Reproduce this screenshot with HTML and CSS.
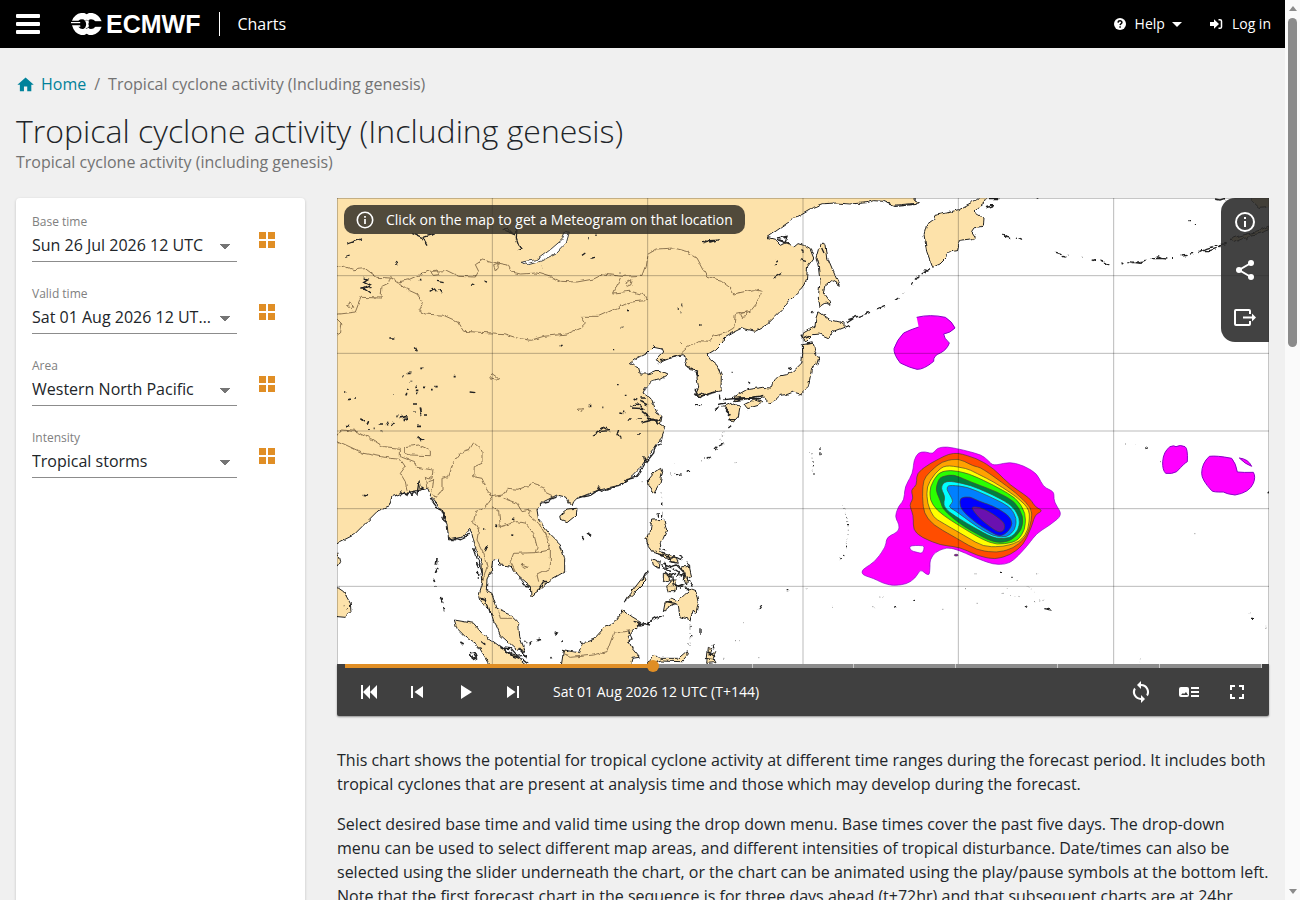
FILE: index.html
```html
<!DOCTYPE html>
<html lang="en">
<head>
<meta charset="utf-8">
<title>Tropical cyclone activity (Including genesis)</title>
<link rel="stylesheet" href="styles.css">
</head>
<body>
<div class="shell">
<div class="page">
  <header class="topbar">
    <button class="menu" aria-label="Menu"><span></span><span></span><span></span></button>
    <a class="logo" href="#" aria-label="ECMWF">
      <svg width="31" height="22" viewBox="0 0 93 66" aria-hidden="true">
        <path fill="#fff" d="M30 0H40L47 4 54 0H64Q84 4 92 25H73Q68 19 60 19 55 19 52 23L47 20 42 23Q39 19 33 19 27 19 22 23H3Q11 3 30 0ZM0 27H28V31H0ZM3 37H28V41H22Q28 48 34 48 39 48 42 44L47 47 52 44Q55 48 60 48 68 48 73 41H92Q84 62 64 66H54L47 62 40 66H30Q10 62 3 37Z"/>
        <path fill="#fff" d="M42 23Q52 20 54 27H68V39H54Q51 47 42 44Q49 34 42 23Z"/>
        <path d="M29 27Q33 24 39 27 43 33 39 39 33 43 29 39V36H0V32H29ZM54 26Q60 22 67 26H93V40H67Q60 44 54 40 50 33 54 26Z"/>
      </svg>
      <span>ECMWF</span>
    </a>
    <a class="section" href="#">Charts</a>
    <nav class="account">
      <button class="toplink">
        <svg width="12" height="12" viewBox="0 0 12 12"><circle cx="6" cy="6" r="6" fill="#fff"/><path d="M4.1 4.6C4.2 2.2 8 2.3 7.9 4.5 7.8 5.7 6.2 5.8 6.1 7.1M6.1 8.3V9.8" fill="none" stroke="#000" stroke-width="1.5"/></svg>
        Help
        <svg class="caret" width="10" height="5" viewBox="0 0 10 5"><path d="M0 0H10L5 5Z" fill="#fff"/></svg>
      </button>
      <a class="toplink" href="#">
        <svg width="13" height="12" viewBox="0 0 13 12"><path d="M0 4H4V1.2L9 6 4 10.8V8H0Z" fill="#fff"/><path d="M8.500 1.700H10Q11.500 1.700 11.500 3V9Q11.500 10.300 10 10.300H8.500" fill="none" stroke="#fff" stroke-width="1.500"/></svg>
        Log in
      </a>
    </nav>
  </header>

  <main class="content">
    <nav class="crumbs">
      <svg width="20" height="18" viewBox="0 0 24 22"><path fill="#00829b" d="M9.500 20V14H13.500V20H18.500V12H21.500L11.500 3 1.500 12H4.500V20Z"/></svg>
      <a href="#">Home</a><span>/</span><span>Tropical cyclone activity (Including genesis)</span>
    </nav>
    <h1>Tropical cyclone activity (Including genesis)</h1>
    <p class="subtitle">Tropical cyclone activity (including genesis)</p>

    <div class="layout">
      <aside class="filters">
        <div class="filter"><label for="base">Base time</label><select id="base"><option>Sun 26 Jul 2026 12 UTC</option></select><button aria-label="All base times"><i></i><i></i><i></i><i></i></button></div>
        <div class="filter"><label for="valid">Valid time</label><select id="valid"><option>Sat 01 Aug 2026 12 UTC (T+144)</option></select><button aria-label="All valid times"><i></i><i></i><i></i><i></i></button></div>
        <div class="filter"><label for="area">Area</label><select id="area"><option>Western North Pacific</option></select><button aria-label="All areas"><i></i><i></i><i></i><i></i></button></div>
        <div class="filter"><label for="intensity">Intensity</label><select id="intensity"><option>Tropical storms</option></select><button aria-label="All intensities"><i></i><i></i><i></i><i></i></button></div>
      </aside>

      <section class="chart">
        <div class="viewer">
          <svg class="map" viewBox="0 0 2796 1398" role="img" aria-label="Map of the Western North Pacific">
            <defs>
              <filter id="rough" x="0" y="0" width="2796" height="1398" filterUnits="userSpaceOnUse"><feTurbulence type="fractalNoise" baseFrequency=".05" numOctaves="2" seed="4"/><feDisplacementMap in="SourceGraphic" scale="13" xChannelSelector="R" yChannelSelector="G"/><feGaussianBlur stdDeviation="1"/></filter>
            </defs>
            <rect width="2796" height="1398" fill="#fff"/>
            <g filter="url(#rough)">
            <g class="land">
              <path d="M-20-20H1735L1731 6 1748 15 1690 20 1668 22 1640 10 1609 8 1590 14 1540 18 1500 15 1459 17 1420 32 1380 55 1330 90 1290 118 1313 124 1330 142 1350 132 1370 148 1383 137 1400 142 1420 155 1430 180 1412 205 1408 245 1395 272 1360 305 1330 340 1290 380 1255 400 1215 390 1185 405 1160 420 1158 432 1135 455 1110 470 1120 485 1140 502 1153 530 1152 578 1120 585 1090 597 1075 590 1085 570 1080 540 1082 518 1060 515 1045 505 1050 480 1035 470 1000 480 965 495 958 485 980 462 975 450 950 445 930 465 910 475 900 480 877 497 905 510 910 528 935 528 960 517 992 532 970 545 945 550 925 570 918 585 940 600 950 620 960 645 975 655 970 680 985 690 975 718 960 735 929 781 909 811 880 841 850 861 785 876 720 901 710 911 705 924 695 911 690 898 660 891 620 911 600 936 605 966 640 1011 670 1041 683 1081 683 1121 640 1146 600 1181 582 1196 580 1166 545 1136 520 1104 488 1101 487 1084 467 1086 463 1121 450 1146 448 1176 465 1186 480 1231 515 1246 545 1276 548 1316 565 1361 540 1356 490 1311 475 1276 466 1246 430 1211 425 1196 437 1156 435 1096 415 1046 405 1006 398 994 380 1016 335 1026 330 976 315 936 285 901 272 871 240 878 188 888 165 896 155 926 120 941 75 986 50 1011 10 1031-20 1050Z"/>
              <path d="M1944-10 1919 5 1864 35 1829 45 1794 52 1789 65 1769 80 1761 110 1769 160 1787 208 1809 198 1829 178 1832 163 1861 158 1867 130 1909 125 1914 115 1904 100 1911 90 1939 85 1941 60 1924 50 1911 42 1924 28 1944 12 1954-10ZM2745-10V8L2765 28 2820 24V-10Z"/>
              <g transform="translate(909 0)">
                <path d="M535 155 545 135 558 140 563 180 580 220 598 262 575 248 555 265 550 285 568 310 570 322 555 315 540 325 535 300 540 250 535 205 528 180ZM535 340 570 365 612 375 612 388 580 400 567 420 540 408 520 410 500 430 487 420 490 405 525 385 528 360ZM487 440 520 435 525 460 536 480 530 500 515 510 510 540 505 565 490 580 480 588 460 582 440 590 420 592 400 612 385 615 375 598 350 595 310 605 280 608 285 595 320 575 365 568 390 570 405 545 415 535 440 530 460 520 485 495 488 470ZM248 625 275 615 300 625 295 655 280 672 265 660 265 640ZM312 620 345 603 365 610 355 622 320 632Z"/>
              </g>
              <g transform="translate(909 696)">
                <path d="M45 125 65 112 68 125 60 160 42 190 27 170 25 150ZM35 270 72 268 80 300 70 325 58 345 62 365 85 372 110 385 115 400 95 395 70 378 40 370 25 350 18 325 30 310ZM35 385 58 395 55 415 40 405ZM125 410 148 410 155 440 140 445ZM70 430 95 435 85 450 70 455ZM90 450 110 450 105 485 85 485 80 470ZM128 435 143 445 140 465ZM70 545 75 520 95 505 112 512 130 495 150 478 168 485 175 520 168 550 160 540 150 570 120 560 115 530 108 520 88 530ZM20 705 45 672 60 685 115 685 142 662 145 672 125 695 60 693 30 705ZM200 700 205 655 215 660 210 675 228 665 220 685 228 698Z"/>
              </g>
              <g transform="translate(0 696)">
                <path d="M668 255 690 237 720 235 718 255 690 278 670 270ZM868 510 880 490 915 445 925 440 930 450 900 480ZM672 712 680 660 725 668 735 640 770 628 800 595 830 580 860 540 885 560 915 578 885 605 870 620 885 655 907 682 885 685 878 712ZM352 570 410 580 435 610 490 650 540 680 580 715 465 715 425 650 385 620 360 595ZM-20 470 5 475 20 485 40 520 42 545 25 562-20 558ZM-20 350 2 370 8 395-3 415Z"/>
              </g>
            </g>
            <path class="lake" d="M552 193 600 185 640 155 675 125 685 100 697 102 688 135 660 165 610 190 575 200Z"/>
            <g class="border">
              <path d="M-10 210 20 205 50 215 85 212 120 238 160 240 180 253 215 245 270 220 330 218 365 235 415 237 425 220 415 200 440 184 480 195 515 202 525 222 550 228 600 225 650 240 670 250 720 252 770 243 800 228 855 235 915 232 925 205 930 170 960 153 1010 150 1050 160 1080 180 1110 235 1150 247 1180 270 1190 288 1250 275 1275 280 1260 315 1240 340 1195 350 1190 390 1165 405 1130 415 1120 430 1085 428 1050 450 1030 468M180 253 205 272 240 288 257 312 248 340 265 348 320 352 360 370 380 400 500 407 540 420 580 427 620 415 690 408 730 390 745 375 733 355 785 355 840 330 880 312 928 308 920 290 880 280 830 285 850 240M160 240 155 255 135 265 132 300 72 298 55 342-10 350M0 360 15 375 10 405-10 417M1030 430 1035 435"/>
              <g transform="translate(0 696)">
                <path d="M-5 25 15 0 60 5 100 25 140 50 190 55 190 80 230 95 240 112 288 120 285 145 265 140 270 175M-5 30 80 70 160 85 190 88 205 110 190 130 205 155 210 180M205 50 245 45 280 60 280 77 220 75 205 70ZM275 155 290 150 285 185 295 205 315 180 315 145 335 140 350 95 370 70 395 62 410 38 435 60 435 100 412 110 410 140 435 145 450 180 465 200 440 235 415 245 410 275 425 300 420 330 440 370 450 410 437 455M465 200 500 195 510 175 545 178 590 160 620 170 625 190 650 202M465 230 485 245 490 290 540 275 565 280 590 310 600 350 595 368 530 370 520 395 535 425M500 205 540 220 555 245 580 240 575 255 605 280 630 320 640 360 595 368M640 360 640 415 600 435 605 455M485 545 490 565 525 565M680 675 700 682 770 675 810 665 830 610 880 602"/>
              </g>
            </g>
            <path class="border" d="M285 220 300 216 306 230 290 232ZM470 200 482 196 484 206 475 220ZM458 535 468 530 485 542 478 546 460 542ZM30 320 42 315 50 328 38 328ZM725 630 736 630 734 640 724 636ZM865 258 885 245 882 260 868 266ZM1210 345 1230 342 1228 356 1215 358ZM552 1098 573 1105 570 1110 560 1107Z"/>
            <g class="shore">
              <path d="M497 95 515 90 522 105 505 100 530 110 540 90 538 120 545 140 552 150 540 155M225 103 257 118 290 108M257 118 270 140M28 138 75 122M25 178 35 174M80 240 92 243 80 250 100 260 75 270 85 272 102 285M175 192 180 200M300 250 320 254M278 280 292 272 298 280M305 275 315 288M440 250 450 252M402 261 409 262M235 448 241 460M157 420 172 420M398 582 415 584M880 625 900 618 920 632 885 630M765 712 800 688 815 698 790 700M845 695 840 710 850 722M1095 127 1120 132 1145 125M1100 136 1115 128 1135 127M1310 240 1335 225M1315 190 1320 185M1315 200H1320M1320 120 1350 115 1345 130 1320 125 1355 138M1390 185 1410 190M1390 155 1400 160M735 172 745 165M760 184 772 180M615 206 618 205M95 265 100 270"/>
              <path class="dots" d="M196 533H200M212 523H224M250 511H256M217 551H223M210 575H215M235 565H240M258 568H265M282 572H287M295 566H302M236 577H247M237 586H243M205 590H211M168 591H170M350 536H356M22 582H28M35 604H42M52 600H57M228 618H240M250 625 254 648M232 642H236M70 662 78 668M80 672 85 668M95 670 90 680M125 678H138M148 682 155 670M165 680 172 672M175 655H182M188 660 210 655M200 665 213 660M250 652H256M264 651H270M240 682H255M92 690 94 694M110 691H113M26 683H38M130 700H136M242 717H248M755 622H760M796 628H799M840 559H845M866 590V594M893 600 902 605M850 645 856 646M858 640H862M875 663H884M902 663H912M900 708H912M668 443H674M850 389H856M870 337H876M828 457H832M750 120H754M775 109H779M245 245H250M253 229H258M1022 333H1026M1033 322H1036M1030 343H1033M1089 381H1094M848 222H850M910 600H924M910 610 930 620M915 640 935 655M910 675 950 665 965 680M930 660 970 670"/>
              <path d="M185 885 190 880 195 890 205 882 210 892 217 880 225 890 230 880 240 888 246 850 250 876 260 868 265 874M280 900 290 915 300 928 315 935 325 960M315 940 322 945 318 962 328 970M335 1018 345 1028 360 1022 370 1025 385 1018 398 1005M410 1050 420 1080 430 1100 436 1130M620 915 635 912 640 903 655 899 665 891M720 902 740 896 760 892 785 876 780 866 790 880 815 872 850 864 870 845 895 838 910 820 925 795 920 775 930 790 950 765 955 745 970 738 975 718M545 1140 560 1160 580 1166M600 1180 610 1165 620 1150 635 1152M485 1345 510 1360 530 1375 560 1385 575 1397M500 1350 520 1352 540 1375 570 1370M545 1350 570 1380M730 1330 735 1345M875 1300 885 1320 875 1335M890 1270 912 1275 900 1285M430 1200 445 1205 455 1240 470 1250"/>
              <path class="dots" d="M300 1080 298 1100M303 1110 295 1125M290 1145 293 1152M296 1165 292 1168M310 1200 318 1216M320 1230 323 1240M315 1205H318M418 1095 425 1110M420 1120 430 1130M422 1140H428M450 1040 443 1060M370 1332 380 1338M402 1364 410 1362 418 1380 408 1384 400 1368M598 1328 612 1324M650 1302 660 1305 656 1310M675 1330 676 1335M640 1378 643 1380M580 1330V1340M565 1330H568M750 1005 762 1012M735 1018 740 1023M80 892 90 894M240 720 255 725 248 730M525 963 532 965M475 980 480 983M520 1007 527 1010M438 993H442M433 1330 445 1340M862 1212 870 1205M20 1225H22M30 1235H32"/>
              <g transform="translate(909 0)"><path d="M545 150 552 165M620 375 650 355M625 365 690 343M615 390 630 385M710 333 735 322M765 307 775 300M792 290 795 285M815 260 820 255M828 245 835 235M845 228 870 212M850 215 865 220M250 605 300 600 340 598 370 592M285 608 315 600 360 602M255 630 270 650 260 655M235 620 255 615M225 635 240 625M265 665 285 665M165 575 175 595 200 590 230 582M168 590 185 585 205 595M238 590 240 602M140 505 165 515 175 535M60 488 110 475M490 420 510 412M500 438 520 435M480 410 485 420M515 340 520 345M448 515 455 508M325 557 333 552M275 523H278M165 620H185M265 690 275 682M740 15 765 25 830 18"/></g>
              <g transform="translate(909 696)"><path d="M240 45 250 40M225 60 235 50M200 88 213 80M110 134 125 132M140 127 150 124M65 215V225M65 245V260M55 250V260M68 355 75 360M60 380 75 370 90 385 105 380 125 390M70 400 95 410 110 405 130 425 120 440M75 395 80 420 95 425M115 435 135 430 130 450M95 440 100 465 125 470M110 470 135 460M140 395 150 410M148 450 160 470M78 515 105 520M8 450 15 435 25 425M0 585 20 580 50 562 70 555M10 580 30 585M150 590V595M152 615V620M145 640V645M180 595V612M355 540 365 525M443 479H448M620 345V355M600 385 605 390M612 372 610 376M622 262V265M625 282V286M540 55V60M540 70V76M215 648 222 645 220 658M195 685 225 690M205 665 225 680M520 108V112M522 130V134M45 360 55 375 75 380M85 375 90 395 110 398M65 405 70 415 85 412M75 425 90 440 105 430M100 415 115 425 108 440M118 375 128 380 122 388M135 470 145 480M120 475 130 470"/><path class="faint" d="M605 225 612 240 622 262 625 300 622 345M150 570V660M508 68H510M515 70 520 130M252 5 240 40M180 90 210 80M90 132 108 130M60 190 68 215M105 100H110M284 98H287M285 632H300M310 578H312M578 529H581M500 474H503M355 686H358M5 155H12M250 685H260"/></g>
              <g transform="translate(1599 0)"><path d="M400 108 420 122M405 115 415 120M438 120 453 127M558 163 575 168M578 175 586 177M593 169H596M635 178H637M668 188 677 185M692 186 700 190M702 195 718 200M345 30 370 22M360 20H372M500 0H508M360 2H385"/></g>
              <g transform="translate(2259 -594)"><path d="M295 659H300M310 673H316M5 781 15 778M35 781 38 785M42 786 55 795M95 793 100 788M115 785 150 790 170 780M125 788 165 783M180 776 210 775 235 777M200 770 212 776M243 773H248M275 768 290 766M300 762 312 760M325 758 350 745 375 738 395 740M330 752 360 752 380 745M390 735 410 730M375 597 390 600 405 595"/><path class="land" d="M420 718 440 710 480 700 510 690 537 678V690L510 700 480 705 470 720 460 712 430 725Z"/></g>
              <g transform="translate(1539 696)"><path d="M130 530H137M190 511H195M453 430H456M484 442H488M525 528 533 533M580 536 605 540"/><path class="faint" d="M378 430V436M345 476H348M70 530H74M280 538H284M380 520H383M458 490H470M480 495 510 500M535 470 545 480M550 485 560 490M555 515 590 510M500 455H504M470 480 475 476M85 498 100 500M560 430V440"/></g>
              <g transform="translate(2199 696)"><path d="M593 193 600 186M225 54 230 55M546 565H552"/><path class="faint" d="M168 42H171M192 44H195M373 311H376M540 550V554M586 592H589M210 685 213 698M270 95H273"/></g>
            </g>
            </g>
            <g class="magenta">
              <path d="M1739 358Q1780 348 1825 358 1845 370 1854 390 1840 405 1820 408 1820 420 1837 435 1830 455 1810 465 1788 473 1790 490 1760 515 1740 514 1720 510 1690 495 1670 470 1671 452 1680 425 1700 405 1720 395 1745 387 1740 378ZM1676 502H1688V504H1676Z"/>
              <g transform="translate(2199 696)"><path d="M300 50Q312 45 318 50 330 43 345 50 354 55 352 95 345 98 320 125 305 133 287 130 277 120 278 95 280 65 300 50ZM418 79Q440 76 485 85 498 100 502 126 520 128 550 127 558 140 550 160 538 188 495 195 470 192 460 186 430 187 425 182 395 150 395 130 395 100 418 79ZM508 84Q535 87 545 109 525 102 508 84Z"/></g>
            </g>
            <g class="contours" transform="translate(1539 696)">
              <path fill="#f0f" stroke="#8a00c8" fill-rule="evenodd" d="M205 68 225 65 248 72 262 54 290 50 340 60 395 75 415 92 430 107 480 96 520 107 560 130 580 170 605 182 612 190 612 215 637 255 600 285 560 310 530 350 490 392 465 403 430 403 380 385 325 360 290 352 255 367 240 390 240 412 238 435 228 432 212 418 195 445 170 462 130 467 100 460 70 445 38 435 35 420 75 395 107 350 110 322 145 305 148 285 135 260 145 230 162 210 165 170 188 130 192 90ZM178 347 222 346 222 358 216 370 205 368 182 362Z"/>
              <path fill="#ff4d00" d="M310 65 380 85 430 115 480 165 540 205 555 230 578 242 555 255 545 290 520 345 480 375 435 388 385 378 330 352 270 345 215 322 190 300 190 255 178 225 190 205 183 180 200 165 200 130 240 100Z"/>
              <path fill="#ffa200" d="M325 85 370 108 390 112 425 135 500 190 545 235 545 270 530 320 490 355 440 368 380 360 320 325 250 285 222 250 217 200 220 150 240 125 275 95Z"/>
              <path fill="#ff0" d="M285 105 350 115 380 130 430 155 500 200 540 240 535 300 510 335 460 350 400 350 340 315 280 280 250 262 232 220 230 170 255 130Z"/>
              <path fill="#2aff00" d="M265 128 300 120 355 130 430 165 500 205 527 250 525 300 500 335 440 345 390 325 300 270 260 240 240 210 240 170Z"/>
              <path fill="#008040" d="M275 140 310 133 360 155 440 185 495 215 520 260 515 300 480 335 430 338 340 290 280 240 270 210 257 180 265 150Z"/>
              <path fill="#0ff" d="M300 153 360 165 430 195 485 225 510 265 505 300 480 325 430 325 350 280 295 245 280 225 285 200 273 175 280 158Z"/>
              <path fill="#0080ff" d="M295 165 350 170 420 200 480 230 500 265 495 300 470 322 430 318 380 290 320 245 295 230 310 215 300 195 290 178Z"/>
              <path fill="#00f" d="M330 203 360 200 385 213 430 228 475 255 488 280 475 305 450 320 420 305 380 280 345 250 330 230Z"/>
              <path fill="#6a11b0" d="M362 230 390 232 430 252 465 280 462 303 445 307 420 290 385 262Z"/>
              <path fill="#8a00c8" d="M313 373 324 373 324 378 313 378Z"/>
            </g>
            <path class="grid" d="M0 233H2796M0 466H2796M0 699H2796M0 932H2796M0 1165H2796M466 0V1398M932 0V1398M1398 0V1398M1864 0V1398M2330 0V1398M0 1H2796M2795 0V1398M1 0V1398"/>
          </svg>
          <div class="hint">
            <svg width="18" height="18" viewBox="0 0 18 18"><circle cx="9" cy="9" r="7.700" fill="none" stroke="#fff" stroke-width="1.600"/><path d="M9 8V13M9 5V6.700" stroke="#fff" stroke-width="1.700"/></svg>
            <span>Click on the map to get a Meteogram on that location</span>
          </div>
          <div class="tools">
            <button aria-label="Information"><svg width="20" height="20" viewBox="0 0 20 20"><circle cx="10" cy="10" r="9" fill="none" stroke="#fff" stroke-width="2"/><path d="M10 9V15M10 5V7" stroke="#fff" stroke-width="2"/></svg></button>
            <button aria-label="Share"><svg width="20" height="20" viewBox="0 0 20 20"><path d="M16 3 4 10 16 17" fill="none" stroke="#fff" stroke-width="2"/><g fill="#fff"><circle cx="16" cy="3" r="3"/><circle cx="4" cy="10" r="3"/><circle cx="16" cy="17" r="3"/></g></svg></button>
            <button aria-label="Export"><svg width="22" height="18" viewBox="0 0 22 18"><path d="M16 5V2Q16 1 15 1H2Q1 1 1 2V15Q1 16 2 16H15Q16 16 16 15V12M9 8.500H20" fill="none" stroke="#fff" stroke-width="2"/><path d="M18 4.500 22 8.500 18 12.500Z" fill="#fff"/></svg></button>
          </div>
        </div>
        <div class="player">
          <input class="timeline" type="range" min="0" max="9" value="3" aria-label="Forecast step">
          <div class="controls">
            <button aria-label="First"><svg viewBox="0 0 24 24"><path d="M4 5H6V19H4ZM13 5V19L6 12ZM20 5V19L13 12Z"/></svg></button>
            <button aria-label="Previous"><svg viewBox="0 0 24 24"><path d="M6 6H8V18H6ZM18 6V18L9.500 12Z"/></svg></button>
            <button aria-label="Play"><svg viewBox="0 0 24 24"><path d="M8 5V19L19 12Z"/></svg></button>
            <button aria-label="Next"><svg viewBox="0 0 24 24"><path d="M16 6H18V18H16ZM6 6V18L14.500 12Z"/></svg></button>
            <output>Sat 01 Aug 2026 12 UTC (T+144)</output>
            <button class="first-right" aria-label="Loop"><svg viewBox="0 0 24 24"><path d="M12 4V1L8 5 12 9V6A6 6 0 0 1 17.300 14.800L18.800 16.300A8 8 0 0 0 12 4ZM12 18A6 6 0 0 1 6.700 9.200L5.200 7.700A8 8 0 0 0 12 20V23L16 19 12 15Z"/></svg></button>
            <button aria-label="Legend"><svg viewBox="0 0 24 24"><path fill-rule="evenodd" d="M4 7H10Q12 7 12 9V15Q12 17 10 17H4Q2 17 2 15V9Q2 7 4 7ZM4 15H11L9 12 7 14 6 13ZM14 7H22V9H14ZM14 11H22V13H14ZM14 15H22V17H14Z"/></svg></button>
            <button aria-label="Full screen"><svg viewBox="0 0 24 24"><path d="M5 5H10V7H7V10H5ZM14 5H19V10H17V7H14ZM5 14H7V17H10V19H5ZM17 14H19V19H14V17H17Z"/></svg></button>
          </div>
        </div>
        <p>This chart shows the potential for tropical cyclone activity at different time ranges during the forecast period. It includes both tropical cyclones that are present at analysis time and those which may develop during the forecast.</p>
        <p>Select desired base time and valid time using the drop down menu. Base times cover the past five days. The drop-down menu can be used to select different map areas, and different intensities of tropical disturbance. Date/times can also be selected using the slider underneath the chart, or the chart can be animated using the play/pause symbols at the bottom left. Note that the first forecast chart in the sequence is for three days ahead (t+72hr) and that subsequent charts are at 24hr</p>
      </section>
    </div>
  </main>
</div>
<div class="scrollbar" aria-hidden="true"><span class="up"></span><span class="thumb"></span><span class="down"></span></div>
</div>
<script src="contours.js"></script>
</body>
</html>
```
FILE: contours.js
```js
// Rounds each contour ring: every listed point steers a curve between the midpoints of its sides.
document.querySelectorAll('.contours path').forEach(function (path) {
  var rings = path.getAttribute('d').split('Z').filter(Boolean);
  path.setAttribute('d', rings.map(function (ring) {
    var n = ring.slice(1).trim().split(/\s+/).map(Number);
    var pts = [];
    for (var i = 0; i < n.length; i += 2) pts.push([n[i], n[i + 1]]);
    var out = '';
    pts.forEach(function (p, k) {
      var a = pts[(k + pts.length - 1) % pts.length];
      var b = pts[(k + 1) % pts.length];
      var t = 0.6;
      var s = [p[0] + (a[0] - p[0]) * (1 - t), p[1] + (a[1] - p[1]) * (1 - t)];
      var e = [p[0] + (b[0] - p[0]) * (1 - t), p[1] + (b[1] - p[1]) * (1 - t)];
      out += (k ? 'L' : 'M') + s.join(' ') + 'Q' + p.join(' ') + ' ' + e.join(' ');
    });
    return out + 'Z';
  }).join(''));
});
```
FILE: styles.css
```css
* { box-sizing: border-box; }
body { margin: 0; background: #f0f0f0; color: #212529; font: 16px/24px "Open Sans", "Noto Sans", sans-serif; }
button { padding: 0; border: 0; background: none; color: inherit; font: inherit; cursor: pointer; }
a { color: inherit; text-decoration: none; }
svg { display: block; flex: none; }
p { margin: 0 0 16px; }

.shell { display: flex; height: 100vh; overflow: hidden; }
.page { flex: 1; min-width: 0; display: flex; flex-direction: column; overflow: hidden; }

.topbar { flex: none; display: flex; align-items: center; height: 48px; padding: 0 14px 0 16px; background: #000; color: #fff; }
.menu { display: grid; gap: 4px; width: 24px; margin-right: 31px; }
.menu span { height: 4px; border-radius: 1px; background: #fff; }
.logo { display: flex; align-items: center; gap: 4px; font: bold 25px/24px "Liberation Sans", Arial, sans-serif; }
.section { margin-left: 19px; padding-left: 17px; border-left: 1px solid #fff; }
.account { display: flex; gap: 28px; margin-left: auto; font-size: 14px; }
.toplink { display: flex; align-items: center; gap: 9px; }
.caret { margin-left: -2px; }

.content { flex: 1; display: flex; flex-direction: column; padding: 24px 16px 0; }
.crumbs { display: flex; align-items: center; gap: 8px; color: #737373; }
.crumbs svg { margin-right: -3px; }
.crumbs a { color: #00829b; }
h1 { margin: 16px 0 0; font-size: 32px; font-weight: 300; line-height: 38px; }
.subtitle { margin: 0 0 24px; color: #737373; }

.layout { flex: 1; display: grid; grid-template-columns: 289px minmax(0, 1fr); gap: 32px; }
.filters { padding: 16px; border-radius: 4px; background: #fff; box-shadow: 0 1px 3px rgba(0, 0, 0, .2); }
.filter { display: grid; grid-template-columns: 205px 20px; column-gap: 20px; align-items: start; height: 48px; margin-bottom: 24px; }
.filter label { grid-column: 1 / -1; color: #808080; font-size: 12px; line-height: 16px; }
.filter select { width: 100%; height: 32px; padding: 0 24px 2px 0; border: 0; border-bottom: 1px solid #8c8c8c; border-radius: 0; appearance: none; color: #212529; font: inherit; text-overflow: ellipsis; background: linear-gradient(to bottom left, #757575 50%, transparent 51%) right 12px top 14px / 5px 5px no-repeat, linear-gradient(to bottom right, #757575 50%, transparent 51%) right 7px top 14px / 5px 5px no-repeat; }
.filter button { display: grid; grid-template-columns: 7px 7px; gap: 2px; justify-content: center; padding-top: 2px; }
.filter i { height: 7px; background: #e08e25; }

.viewer { position: relative; background: #fff; }
.map { width: 100%; height: auto; }
.land { fill: #fde2aa; stroke: #222; stroke-width: 3; }
.lake { fill: #fff; stroke: #444; stroke-width: 3; }
.border { fill: none; stroke: #8d7551; stroke-width: 3; }
.shore { fill: none; stroke: #222; stroke-width: 4; }
.shore .dots { stroke-width: 5; }
.shore .faint { stroke: #888; stroke-width: 3; stroke-dasharray: 3 10; }
.shore .land { stroke-width: 3; }
.magenta { fill: #f0f; stroke: #8a00c8; stroke-width: 3; }
.contours { stroke: #4a4030; stroke-width: 2; stroke-linejoin: round; }
.grid { fill: none; stroke: #000; stroke-opacity: .27; stroke-width: 3; }

.hint { position: absolute; top: 7px; left: 7px; display: flex; align-items: center; gap: 12px; height: 29px; padding: 0 12px; border-radius: 10px; background: rgba(51, 47, 40, .85); color: #fff; font-size: 14px; }
.tools { position: absolute; top: 0; right: 0; width: 48px; border-radius: 14px 0 0 14px; background: rgba(40, 40, 40, .88); }
.tools button { display: grid; place-items: center; width: 48px; height: 48px; }

.player { margin-bottom: 32px; border-radius: 0 0 2px 2px; background: #404040; box-shadow: 0 1px 2px rgba(0, 0, 0, .4); }
.timeline { position: relative; display: block; width: calc(100% - 15px); height: 4px; margin: 0 7px 0 8px; appearance: none; background: linear-gradient(to right, #e08e25 33.5%, transparent 0), repeating-linear-gradient(to right, #8c8c8c 0 calc(100% / 9 - 1px), #ccc 0 calc(100% / 9)); }
.timeline::-webkit-slider-thumb { appearance: none; width: 12px; height: 12px; border-radius: 50%; background: #e08e25; }
.controls { display: flex; align-items: center; height: 48px; padding: 0 8px; color: #fff; font-size: 14px; }
.controls button { display: grid; place-items: center; width: 48px; height: 48px; }
.controls svg { width: 24px; height: 24px; fill: #fff; }
.controls output { margin-left: 16px; }
.first-right { margin-left: auto; }

.scrollbar { flex: none; display: flex; flex-direction: column; align-items: center; width: 15px; padding: 6px 0; background: #fafafa; }
.up, .down { border: 4px solid transparent; border-top-width: 0; border-bottom: 5px solid #8b8b8b; }
.down { margin-top: auto; transform: rotate(180deg); }
.thumb { width: 9px; height: 37%; margin-top: 7px; border-radius: 5px; background: #8b8b8b; }
```
